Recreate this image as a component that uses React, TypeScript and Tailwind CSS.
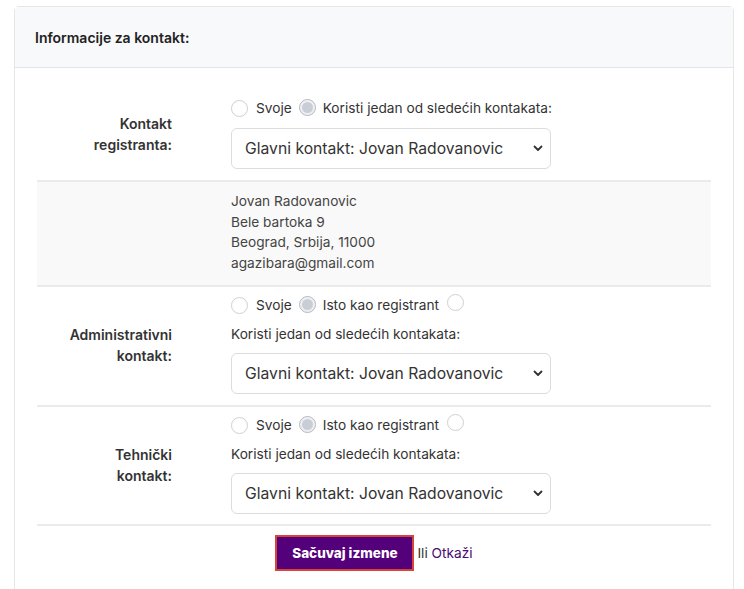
import React from "react";

function Radio({ checked }: { checked?: boolean }) {
  return checked ? (
    <span className="inline-flex h-[17px] w-[17px] shrink-0 items-center justify-center rounded-full border border-[#b5b9c0] bg-[#eef0f3]">
      <span className="h-[11px] w-[11px] rounded-full bg-[#c9ced6]" />
    </span>
  ) : (
    <span className="inline-block h-[17px] w-[17px] shrink-0 rounded-full border border-[#cfcfcf] bg-white" />
  );
}

function Select() {
  return (
    <div className="flex h-[41px] w-[320px] items-center justify-between rounded-[6px] border border-[#dcdcdc] bg-white pl-[13px] pr-[7px] text-[15.7px] text-[#333]">
      <span>Glavni kontakt: Jovan Radovanovic</span>
      <svg width="10" height="7" viewBox="0 0 10 7">
        <path d="M1.5 1.5 L5 5 L8.5 1.5" fill="none" stroke="#333" strokeWidth="1.8" strokeLinecap="round" strokeLinejoin="round" />
      </svg>
    </div>
  );
}

function Label({ l1, l2 }: { l1: string; l2: string }) {
  return (
    <div className="flex w-[135px] shrink-0 items-center justify-end">
      <div className="text-right text-[14px] font-semibold leading-[21px] text-[#333]">
        <div>{l1}</div>
        <div>{l2}</div>
      </div>
    </div>
  );
}

export default function App() {
  return (
    <div className="min-h-[589px] bg-white pl-[14px] pr-[10px] pt-[6px] font-['Inter',sans-serif] text-[#333]">
      <div className="h-[600px] rounded-t-[5px] border border-[#e6e6e6]">
        <div className="flex h-[61px] items-center border-b border-[#e3e5e8] bg-[#f8f9fa] pl-[20px] text-[14px] font-semibold text-[#222]">
          Informacije za kontakt:
        </div>
        <div className="px-[22px] pt-[20px]">
          {/* Row 1 */}
          <div className="flex pt-[10px] pb-[11px]">
            <Label l1="Kontakt" l2="registranta:" />
            <div className="pl-[59px]">
              <div className="flex h-[20px] items-center text-[13.7px] text-[#333]">
                <Radio />
                <span className="ml-[8px]">Svoje</span>
                <span className="ml-[7px]"><Radio checked /></span>
                <span className="ml-[7px]">Koristi jedan od sledećih kontakata:</span>
              </div>
              <div className="mt-[10px]">
                <Select />
              </div>
            </div>
          </div>
          {/* Row 2 */}
          <div className="flex border-t-2 border-[#ebebeb] bg-[#f9f9f9] pt-[9px] pb-[12px]">
            <div className="w-[135px] shrink-0" />
            <div className="pl-[59px] text-[13.7px] leading-[20.5px] text-[#444]">
              <div>Jovan Radovanovic</div>
              <div>Bele bartoka 9</div>
              <div>Beograd, Srbija, 11000</div>
              <div>agazibara@gmail.com</div>
            </div>
          </div>
          {/* Row 3 */}
          <div className="flex border-t-2 border-[#ebebeb] pt-[8px] pb-[11px]">
            <Label l1="Administrativni" l2="kontakt:" />
            <div className="pl-[59px]">
              <div className="flex h-[20px] items-center text-[13.7px] text-[#333]">
                <Radio />
                <span className="ml-[8px]">Svoje</span>
                <span className="ml-[7px]"><Radio checked /></span>
                <span className="ml-[7px]">Isto kao registrant</span>
                <span className="ml-[8px]"><Radio /></span>
              </div>
              <div className="mt-[9px] h-[20px] text-[13.7px] leading-[20px] text-[#333]">
                Koristi jedan od sledećih kontakata:
              </div>
              <div className="mt-[9px]">
                <Select />
              </div>
            </div>
          </div>
          {/* Row 4 */}
          <div className="flex border-t-2 border-[#ebebeb] pt-[8px] pb-[10px]">
            <Label l1="Tehnički" l2="kontakt:" />
            <div className="pl-[59px]">
              <div className="flex h-[20px] items-center text-[13.7px] text-[#333]">
                <Radio />
                <span className="ml-[8px]">Svoje</span>
                <span className="ml-[7px]"><Radio checked /></span>
                <span className="ml-[7px]">Isto kao registrant</span>
                <span className="ml-[8px]"><Radio /></span>
              </div>
              <div className="mt-[9px] h-[20px] text-[13.7px] leading-[20px] text-[#333]">
                Koristi jedan od sledećih kontakata:
              </div>
              <div className="mt-[9px]">
                <Select />
              </div>
            </div>
          </div>
          {/* Row 5 */}
          <div className="flex items-center justify-center border-t-2 border-[#ebebeb] pt-[9px]">
            <button className="flex h-[36px] w-[139px] items-center justify-center border-2 border-[#d8433a] bg-[#54007a] text-[13.5px] font-extrabold text-white">
              Sačuvaj izmene
            </button>
            <span className="ml-[3px] text-[13.7px] text-[#333]">
              Ili <span className="text-[#4b0a70]">Otkaži</span>
            </span>
          </div>
        </div>
      </div>
    </div>
  );
}
